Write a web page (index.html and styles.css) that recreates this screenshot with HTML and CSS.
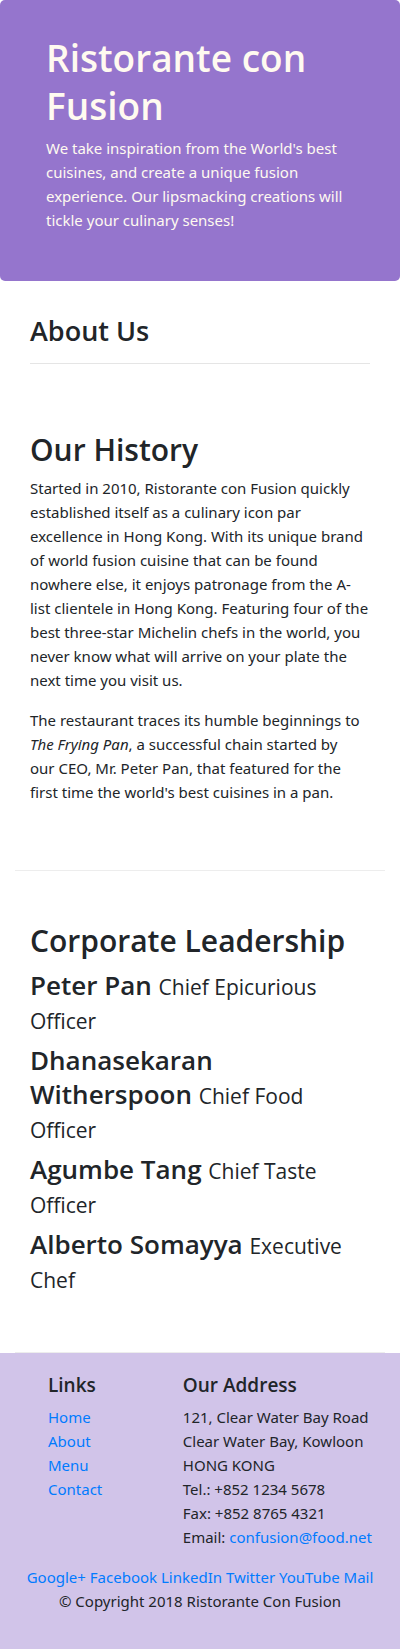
FILE: index.html
```html
<!DOCTYPE html>
<html lang="en">
<head>
<meta charset="utf-8">
<meta name="viewport" content="width=device-width, initial-scale=1">
<title>Ristorante Con Fusion: About Us</title>
<link rel="stylesheet" href="styles.css">
</head>
<body>
<header class="jumbotron">
  <h1 class="brand">Ristorante con Fusion</h1>
  <p class="text">We take inspiration from the World's best cuisines, and create a unique fusion experience. Our lipsmacking creations will tickle your culinary senses!</p>
</header>
<main class="container">
  <div class="page-title">
    <h3 class="subheading">About Us</h3>
    <hr class="rule">
  </div>
  <section class="row-content">
    <h2 class="heading">Our History</h2>
    <p class="text">Started in 2010, Ristorante con Fusion quickly established itself as a culinary icon par excellence in Hong Kong. With its unique brand of world fusion cuisine that can be found nowhere else, it enjoys patronage from the A-<wbr>list clientele in Hong Kong. Featuring four of the best three-star Michelin chefs in the world, you never know what will arrive on your plate the next time you visit us.</p>
    <p class="text">The restaurant traces its humble beginnings to <em>The Frying Pan</em>, a successful chain started by our&nbsp;CEO, Mr. Peter Pan, that featured for the first time the world's best cuisines in a pan.</p>
  </section>
  <section class="row-content team">
    <h2 class="heading">Corporate Leadership</h2>
    <h3 class="member">Peter Pan <small class="role">Chief Epicurious Officer</small></h3>
    <h3 class="member">Dhanasekaran Witherspoon <small class="role">Chief Food Officer</small></h3>
    <h3 class="member">Agumbe Tang <small class="role">Chief Taste Officer</small></h3>
    <h3 class="member">Alberto Somayya <small class="role">Executive Chef</small></h3>
  </section>
</main>
<footer class="footer">
  <div class="footer-columns">
    <nav>
      <h5 class="footer-heading">Links</h5>
      <ul class="links">
        <li><a href="#">Home</a></li>
        <li><a href="#">About</a></li>
        <li><a href="#">Menu</a></li>
        <li><a href="#">Contact</a></li>
      </ul>
    </nav>
    <div>
      <h5 class="footer-heading">Our Address</h5>
      <address class="address">
        121, Clear Water Bay Road<br>
        Clear Water Bay, Kowloon<br>
        HONG KONG<br>
        Tel.: +852 1234 5678<br>
        Fax: +852 8765 4321<br>
        Email: <a href="mailto:confusion@food.net">confusion@food.net</a>
      </address>
    </div>
  </div>
  <div class="social">
    <a href="#">Google+</a>
    <a href="#">Facebook</a>
    <a href="#">LinkedIn</a>
    <a href="#">Twitter</a>
    <a href="#">YouTube</a>
    <a href="mailto:confusion@food.net">Mail</a>
  </div>
  <p class="copyright">© Copyright 2018 Ristorante Con Fusion</p>
</footer>
</body>
</html>
```
FILE: styles.css
```css
*, *::before, *::after { box-sizing: border-box; }
body {
  margin: 0;
  background: #fff;
  color: #212529;
  font-family: "Noto Sans", "Open Sans", sans-serif;
  font-size: 15px;
  line-height: 24px;
}
a { color: #007bff; text-decoration: none; }
a:hover { text-decoration: underline; }
h1, h2, h3, h5 {
  margin: 0 0 8px;
  font-family: "Open Sans", "Noto Sans", sans-serif;
  font-weight: 600;
}
.text { margin: 0 0 16px; }

.jumbotron {
  padding: 34px 46px 33px;
  margin-bottom: 32px;
  border-radius: 5px;
  background: #9575cd;
  color: floralwhite;
}
.brand { margin-bottom: 6px; font-size: 37px; line-height: 48px; }
.heading { margin-bottom: 6px; font-size: 30px; line-height: 40px; }
.subheading { font-size: 27px; line-height: 36px; }
.member {
  margin-bottom: 6px;
  padding-top: 1px;
  font-size: 26px;
  line-height: 34px;
}
.role { font-size: 21px; font-weight: 400; line-height: 24px; }

.container { padding: 0 15px; }
.page-title { padding: 0 15px; }
.rule {
  margin: 14px 0 16px;
  border: 0;
  border-top: 1px solid #e5e5e5;
}
.row-content {
  padding: 50px 15px;
  border-bottom: 1px solid #ededed;
}
.team { padding-bottom: 51px; }

.footer { padding: 20px 15px; background: #d1c4e9; }
.footer-columns {
  display: grid;
  grid-template-columns: 2fr 3fr;
  padding: 0 0 0 33px;
}
.footer-heading { font-size: 19px; line-height: 24px; }
.links { margin: 0; padding: 0; list-style: none; }
.address { margin-bottom: 16px; font-style: normal; white-space: nowrap; }
.social, .copyright { margin: 0; text-align: center; }
.copyright { padding-bottom: 16px; }
```
